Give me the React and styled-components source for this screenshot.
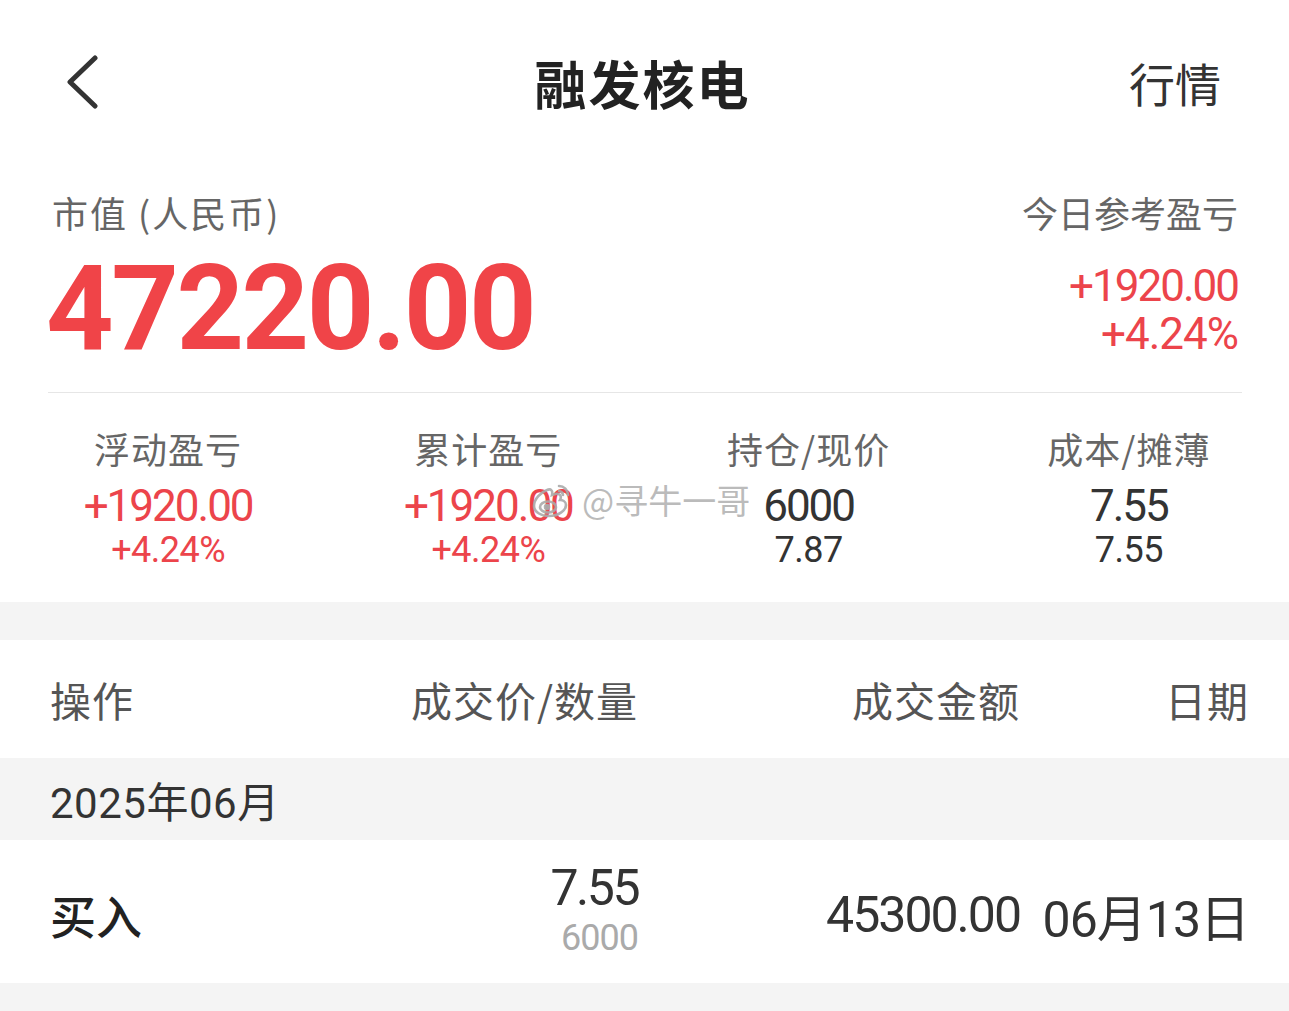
import React from "react";
import styled, { createGlobalStyle } from "styled-components";

const GlobalStyle = createGlobalStyle`
    html, body {
        margin: 0;
        padding: 0;
        background: #ffffff;
    }
    body {
        font-family: "Noto Sans CJK SC", "Noto Sans", sans-serif;
        color: #222;
    }
`;

const NUM = `"Roboto", "Noto Sans CJK SC", sans-serif`;
const RED = "#ec444b";

const Page = styled.div`
    width: 1289px;
    height: 1011px;
    overflow: hidden;
    background: #fff;
`;

const NavBar = styled.header`
    height: 170px;
    display: grid;
    grid-template-columns: 200px 1fr 200px;
    align-items: center;
    padding: 0 68px 6px 64px;
    box-sizing: border-box;
`;

const BackButton = styled.button`
    border: none;
    background: none;
    padding: 0;
    width: 40px;
    height: 56px;
    display: flex;
    align-items: center;
    cursor: pointer;
`;

const Title = styled.h1`
    margin: 0;
    text-align: center;
    font-size: 52px;
    font-weight: 700;
    color: #222;
    letter-spacing: 2px;
`;

const NavLink = styled.a`
    justify-self: end;
    font-size: 46px;
    color: #333;
    text-decoration: none;
`;

const Summary = styled.section`
    margin: 0 47px 0 48px;
    padding: 20px 0 0;
    height: 202px;
    border-bottom: 1px solid #e6e6e6;
    display: flex;
    justify-content: space-between;
`;

const SummaryBlock = styled.div`
    display: flex;
    flex-direction: column;
    align-items: ${p => (p.$right ? "flex-end" : "flex-start")};
    padding: ${p => (p.$right ? "0 4px 0 0" : "0 0 0 4px")};
`;

const Caption = styled.div`
    font-size: 36px;
    line-height: 44px;
    color: #666;
    letter-spacing: ${p => (p.$wide ? "2px" : "0")};
`;

const BigValue = styled.div`
    margin-top: 16px;
    margin-left: -6px;
    font-family: "Roboto", sans-serif;
    font-weight: 700;
    font-size: 118px;
    line-height: 1;
    letter-spacing: -2.5px;
    color: #f04448;
`;

const SideValue = styled.div`
    font-family: ${NUM};
    font-size: 44px;
    line-height: 48px;
    letter-spacing: ${p => p.$ls || 0}px;
    color: ${RED};
    margin-top: ${p => p.$top || 0}px;
`;

const Stats = styled.section`
    position: relative;
    display: grid;
    grid-template-columns: repeat(4, 1fr);
    padding: 33px 0 0 8px;
    height: 209px;
    box-sizing: border-box;
`;

const StatCol = styled.div`
    display: flex;
    flex-direction: column;
    align-items: center;
`;

const StatLabel = styled.div`
    font-size: 36px;
    line-height: 44px;
    color: #666;
    letter-spacing: 1px;
`;

const StatMain = styled.div`
    margin-top: 13px;
    font-family: ${NUM};
    font-size: 44px;
    line-height: 46px;
    letter-spacing: -2px;
    color: ${p => (p.$red ? RED : "#333")};
`;

const StatSub = styled.div`
    font-family: ${NUM};
    font-size: 36px;
    line-height: 42px;
    letter-spacing: -0.5px;
    color: ${p => (p.$red ? RED : "#333")};
`;

const Watermark = styled.div`
    position: absolute;
    left: 530px;
    top: 82px;
    display: flex;
    align-items: center;
    gap: 8px;
    font-size: 34px;
    color: rgba(175, 175, 175, 0.85);
    text-shadow: 0 0 2px #fff, 0 0 3px #fff;
    pointer-events: none;
`;

const Band = styled.div`
    height: ${p => p.$h}px;
    background: #f4f4f4;
`;

const Row = styled.div`
    display: grid;
    grid-template-columns: 360px 228px 382px 229px;
    align-items: center;
    padding: 0 36px 0 50px;
    height: ${p => p.$h}px;
    background: #fff;
`;

const HeadCell = styled.div`
    font-size: 41px;
    color: #555;
    letter-spacing: 1px;
    text-align: ${p => (p.$left ? "left" : "right")};
`;

const MonthRow = styled.div`
    height: 82px;
    background: #f4f4f4;
    display: flex;
    align-items: center;
    padding-left: 50px;
    font-size: 42px;
    letter-spacing: 0.5px;
    color: #333;
    font-family: ${NUM};
`;

const Action = styled.div`
    font-size: 46px;
    font-weight: 500;
    color: #222;
    padding-top: 4px;
`;

const PriceCell = styled.div`
    display: flex;
    flex-direction: column;
    align-items: flex-end;
`;

const Price = styled.div`
    font-family: ${NUM};
    font-size: 50px;
    line-height: 52px;
    letter-spacing: -2.5px;
    color: #333;
`;

const Qty = styled.div`
    font-family: ${NUM};
    font-size: 36px;
    line-height: 48px;
    letter-spacing: -1px;
    color: #aaa;
`;

const Amount = styled.div`
    font-family: ${NUM};
    font-size: 50px;
    letter-spacing: ${p => p.$ls}px;
    color: #333;
    text-align: right;
    padding-top: 6px;
`;

const ChevronLeft = () => (
    <svg width="36" height="54" viewBox="0 0 36 54" fill="none">
        <path d="M31 3 L6 27 L31 51" stroke="#333" strokeWidth="5" strokeLinecap="round" strokeLinejoin="round" />
    </svg>
);

const WeiboMark = () => (
    <svg width="44" height="38" viewBox="0 0 44 38" fill="none" stroke="rgba(170,170,170,0.9)" strokeWidth="2.6">
        <path d="M17 9c-6 2-13 9-13 16 0 6 7 10 15 10 10 0 17-6 17-11 0-4-4-5-6-5 2-4 0-7-5-6l-3 1c1-4-1-7-5-5z" />
        <ellipse cx="18" cy="26" rx="8" ry="5.5" />
        <circle cx="17" cy="26" r="2" fill="rgba(170,170,170,0.9)" />
        <path d="M29 5c5 0 9 4 9 9" strokeLinecap="round" />
        <path d="M29 10c2 0 4 2 4 4" strokeLinecap="round" />
    </svg>
);

const stats = [
    { label: "浮动盈亏", main: "+1920.00", sub: "+4.24%", red: true },
    { label: "累计盈亏", main: "+1920.00", sub: "+4.24%", red: true },
    { label: "持仓/现价", main: "6000", sub: "7.87" },
    { label: "成本/摊薄", main: "7.55", sub: "7.55" },
];

const App = () => (
    <>
        <GlobalStyle />
        <Page>
            <NavBar>
                <BackButton aria-label="返回"><ChevronLeft /></BackButton>
                <Title>融发核电</Title>
                <NavLink href="#">行情</NavLink>
            </NavBar>

            <Summary>
                <SummaryBlock>
                    <Caption $wide>市值 (人民币)</Caption>
                    <BigValue>47220.00</BigValue>
                </SummaryBlock>
                <SummaryBlock $right>
                    <Caption>今日参考盈亏</Caption>
                    <SideValue $top={28} $ls={-2}>+1920.00</SideValue>
                    <SideValue $ls={-1}>+4.24%</SideValue>
                </SummaryBlock>
            </Summary>

            <Stats>
                {stats.map((s, i) => (
                    <StatCol key={`stat-${i}`}>
                        <StatLabel>{s.label}</StatLabel>
                        <StatMain $red={s.red}>{s.main}</StatMain>
                        <StatSub $red={s.red}>{s.sub}</StatSub>
                    </StatCol>
                ))}
                <Watermark>
                    <WeiboMark />
                    <span>@寻牛一哥</span>
                </Watermark>
            </Stats>

            <Band $h={38} />

            <Row $h={118}>
                <HeadCell $left>操作</HeadCell>
                <HeadCell>成交价/数量</HeadCell>
                <HeadCell>成交金额</HeadCell>
                <HeadCell>日期</HeadCell>
            </Row>

            <MonthRow>2025年06月</MonthRow>

            <Row $h={143}>
                <Action>买入</Action>
                <PriceCell>
                    <Price>7.55</Price>
                    <Qty>6000</Qty>
                </PriceCell>
                <Amount $ls={-2}>45300.00</Amount>
                <Amount $ls={-1}>06月13日</Amount>
            </Row>

            <Band $h={40} />
        </Page>
    </>
);

export default App;
